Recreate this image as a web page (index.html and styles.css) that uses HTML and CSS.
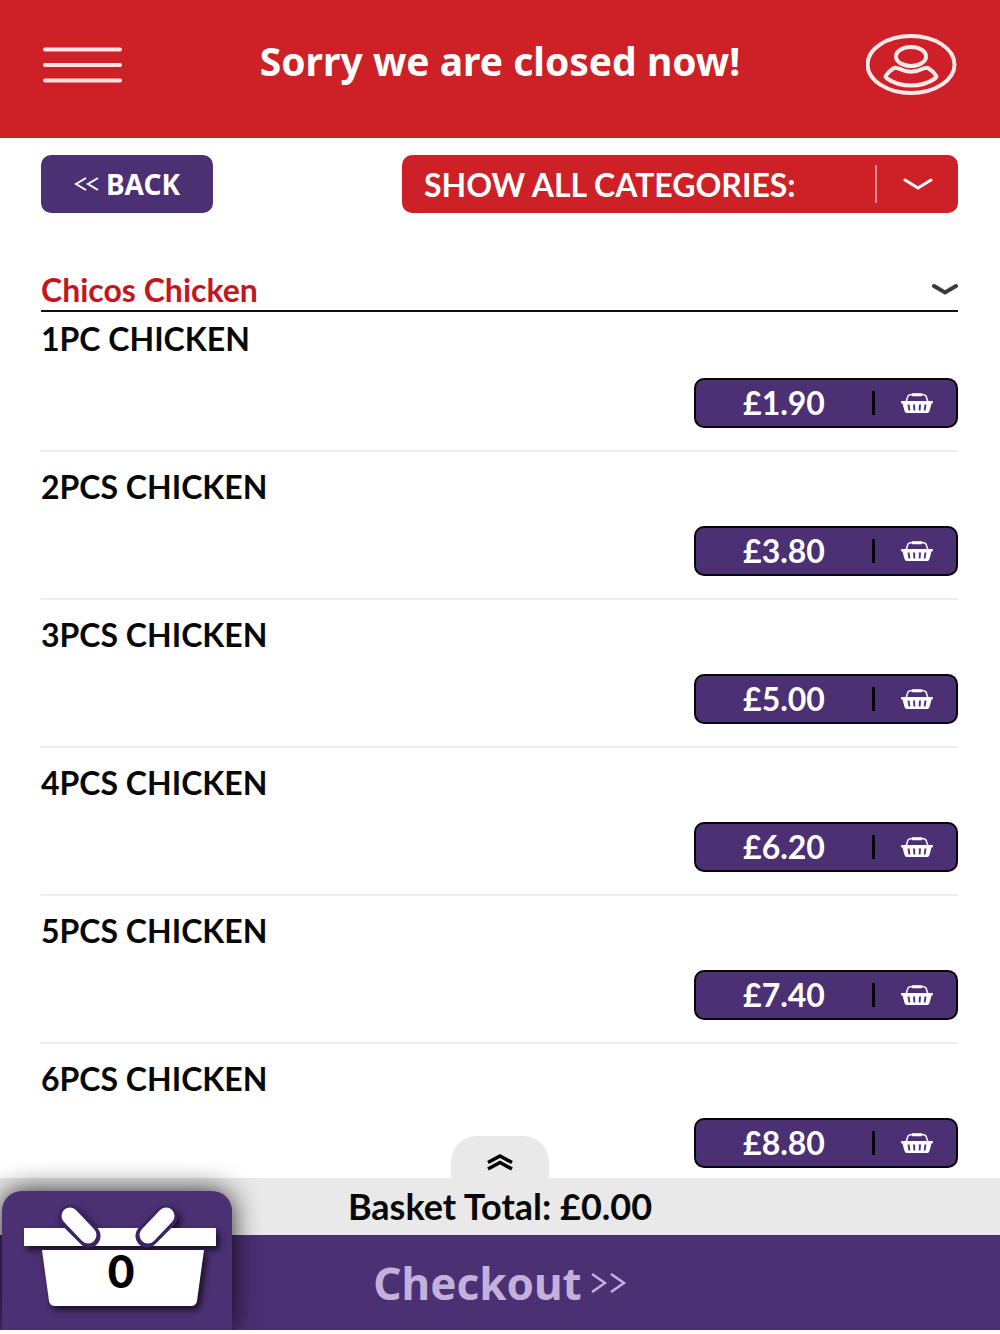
FILE: index.html
```html
<!DOCTYPE html>
<html lang="en">
<head>
<meta charset="utf-8">
<meta name="viewport" content="width=device-width, initial-scale=1">
<title>Chicos Chicken</title>
<link rel="stylesheet" href="styles.css">
</head>
<body>
<svg width="0" height="0" class="sprite" aria-hidden="true">
  <symbol id="basket" viewBox="0 0 32 20">
    <path d="M5 9 7 3Q8 1.500 11 1.500H21Q24 1.500 25 3L27 9" fill="none" stroke="#fff" stroke-width="1.500"/>
    <path d="M12 1.800H20" stroke="#fff" stroke-width="3" stroke-linecap="round"/>
    <path fill-rule="evenodd" fill="#fff" d="M1 8H31Q32 8 32 9T31 10.500H30.500L28.500 18Q28 20 26 20H6Q4 20 3.500 18L1.500 10.500H1Q0 10.500 0 9T1 8ZM6.500 11.500 7.500 17.500H9.300L8.500 11.500ZM12 11.500 12.500 17.500H14.300L14 11.500ZM18 11.500 17.700 17.500H19.500L20 11.500ZM23.500 11.500 22.700 17.500H24.500L25.500 11.500Z"/>
  </symbol>
</svg>

<header class="topbar">
  <button class="icon-button" aria-label="Menu">
    <svg width="82" height="38" viewBox="0 0 82 38"><path d="M3 3.500H78M3 19H78M3 34.500H78" stroke="#ffe3e4" stroke-width="4" stroke-linecap="round"/></svg>
  </button>
  <h1 class="notice">Sorry we are closed now!</h1>
  <button class="icon-button" aria-label="My account">
    <svg width="92" height="62" viewBox="0 0 92 62" fill="none" stroke="#ffe8e8" stroke-width="4">
      <ellipse cx="45" cy="30.500" rx="43.500" ry="28.500"/>
      <ellipse cx="45" cy="22.500" rx="15" ry="9.500"/>
      <path d="M28 34Q29.500 33.300 32 34.300Q45 41 58 34.300Q60.500 33.300 62 34Q67 37 70 41.500Q71 43 69 44.500Q59 51.500 45 51.500Q31 51.500 21 44.500Q19 43 20 41.500Q23 37 28 34Z"/>
    </svg>
  </button>
</header>

<main class="content">
  <div class="toolbar">
    <button class="back"><svg width="26" height="14" viewBox="0 0 26 14"><path d="M12 1 2 7 12 13M24 1 14 7 24 13" fill="none" stroke="#fff" stroke-width="2"/></svg>BACK</button>
    <div class="categories">
      <select class="categories-select" aria-label="Category"><option>SHOW ALL CATEGORIES:</option></select>
      <span class="categories-arrow"><svg width="30" height="14" viewBox="0 0 30 14"><path d="M2 3 15 11 28 3" fill="none" stroke="#fff" stroke-width="3" stroke-linecap="round"/></svg></span>
    </div>
  </div>

  <h2 class="section"><button class="section-toggle" aria-expanded="true">Chicos Chicken<svg width="26" height="12" viewBox="0 0 26 12"><path d="M2 3 13 9.500 24 3" fill="none" stroke="#3a3a3a" stroke-width="4" stroke-linecap="round"/></svg></button></h2>

  <ul class="items">
    <li class="item"><h3 class="item-name">1PC CHICKEN</h3><button class="price"><span class="amount">£1.90</span><svg class="price-icon" width="32" height="20"><use href="#basket"/></svg></button></li>
    <li class="item"><h3 class="item-name">2PCS CHICKEN</h3><button class="price"><span class="amount">£3.80</span><svg class="price-icon" width="32" height="20"><use href="#basket"/></svg></button></li>
    <li class="item"><h3 class="item-name">3PCS CHICKEN</h3><button class="price"><span class="amount">£5.00</span><svg class="price-icon" width="32" height="20"><use href="#basket"/></svg></button></li>
    <li class="item"><h3 class="item-name">4PCS CHICKEN</h3><button class="price"><span class="amount">£6.20</span><svg class="price-icon" width="32" height="20"><use href="#basket"/></svg></button></li>
    <li class="item"><h3 class="item-name">5PCS CHICKEN</h3><button class="price"><span class="amount">£7.40</span><svg class="price-icon" width="32" height="20"><use href="#basket"/></svg></button></li>
    <li class="item"><h3 class="item-name">6PCS CHICKEN</h3><button class="price"><span class="amount">£8.80</span><svg class="price-icon" width="32" height="20"><use href="#basket"/></svg></button></li>
  </ul>
</main>

<footer class="dock">
  <button class="expand" aria-label="Show basket"><svg width="28" height="18" viewBox="0 0 28 18"><path d="M2 9.500 14 3 26 9.500M2 16 14 9.500 26 16" fill="none" stroke="#000" stroke-width="3.500"/></svg></button>
  <div class="total">Basket Total: £0.00</div>
  <button class="checkout">Checkout<svg width="37" height="20" viewBox="0 0 37 20"><path d="M2 1 15 10 2 19M21 1 34 10 21 19" fill="none" stroke="#c4b1db" stroke-width="2.500"/></svg></button>
  <button class="basket" aria-label="Basket, 0 items">
    <svg class="basket-art" viewBox="0 0 198 108" aria-hidden="true">
      <g fill="#fff">
        <path d="M0 25H192V43H0Z"/>
        <path d="M18 47H180L173 98Q172 103 167 103H31Q26 103 25 98Z"/>
      </g>
      <g stroke-linecap="round">
        <path d="M46 14 65 33M142 14 123 33" stroke="#3b2463" stroke-width="23"/>
        <path d="M46 13 64 32M142 13 124 32" stroke="#fff" stroke-width="17"/>
      </g>
    </svg>
    <span class="basket-count">0</span>
  </button>
</footer>
</body>
</html>
```
FILE: styles.css
```css
* { box-sizing: border-box; }

:root {
  --red: #cd2027;
  --purple: #4b3074;
  --grey: #e9e9e9;
}

body {
  margin: 0;
  min-height: 100vh;
  display: flex;
  flex-direction: column;
  background: #fff;
  color: #080808;
  font-family: Lato, "Noto Sans", sans-serif;
}

button, select {
  margin: 0;
  padding: 0;
  border: 0;
  background: none;
  color: inherit;
  font: inherit;
  cursor: pointer;
}

svg { display: block; flex: none; }
.sprite { position: absolute; }

.topbar {
  display: grid;
  grid-template-columns: 92px 1fr 92px;
  align-items: center;
  height: 138px;
  padding: 0 42px 8px;
  background: var(--red);
  color: #fff;
}

.notice {
  margin: 0;
  padding-bottom: 8px;
  text-align: center;
  font: 700 39px/48px "Noto Sans", sans-serif;
}

.content {
  flex: 1;
  padding: 17px 42px 0 41px;
}

.toolbar {
  display: flex;
  justify-content: space-between;
  height: 58px;
}

.back {
  display: flex;
  align-items: center;
  justify-content: center;
  gap: 6px;
  width: 172px;
  border-radius: 10px;
  background: var(--purple);
  color: #fff;
  font: 700 28px/32px "Noto Sans", sans-serif;
}

.categories {
  display: grid;
  grid-template-columns: 1fr 83px;
  width: 556px;
  max-width: 70%;
  border-radius: 10px;
  background: var(--red);
  color: #fff;
}

.categories-select {
  grid-area: 1 / 1 / 2 / 3;
  appearance: none;
  padding-left: 22px;
  font-size: 32px;
  font-weight: 700;
}

.categories-arrow {
  grid-area: 1 / 2;
  align-self: center;
  display: flex;
  align-items: center;
  justify-content: center;
  height: 38px;
  border-left: 2px solid #f08a8e;
  pointer-events: none;
}

.section {
  margin: 59px 0 0;
  border-bottom: 2px solid #111;
}

.section-toggle {
  display: flex;
  align-items: center;
  justify-content: space-between;
  width: 100%;
  height: 38px;
  padding-bottom: 4px;
  color: #c4161c;
  font-size: 32px;
  font-weight: 700;
}

.items {
  margin: 0;
  padding: 0;
  list-style: none;
}

.item {
  display: flex;
  flex-direction: column;
  gap: 22px;
  padding: 18px 0 22px;
  border-bottom: 2px solid #ededed;
}

.item:first-child { padding-top: 10px; }

.item:last-child {
  padding-bottom: 10px;
  border-bottom: 0;
}

.item-name {
  margin: 0;
  font-size: 32px;
  font-weight: 700;
  line-height: 34px;
}

.price {
  align-self: flex-end;
  display: flex;
  align-items: center;
  width: 264px;
  height: 50px;
  border: 2px solid #060309;
  border-radius: 10px;
  background: var(--purple);
  color: #fff;
  font-size: 32px;
  font-weight: 700;
}

.amount {
  flex: 1;
  border-right: 3px solid #060309;
  line-height: 24px;
}

.price-icon { margin: 0 23px 0 26px; }

.dock {
  position: sticky;
  bottom: 0;
  padding-bottom: 4px;
  background: #fff;
}

.expand {
  position: absolute;
  bottom: 100%;
  left: 50%;
  display: flex;
  align-items: center;
  justify-content: center;
  width: 98px;
  height: 42px;
  margin-left: -49px;
  padding-top: 10px;
  border-radius: 26px 26px 0 0;
  background: var(--grey);
}

.total {
  height: 57px;
  background: var(--grey);
  text-align: center;
  font-size: 36px;
  font-weight: 700;
  line-height: 57px;
}

.checkout {
  display: flex;
  align-items: center;
  justify-content: center;
  gap: 8px;
  width: 100%;
  height: 95px;
  background: var(--purple);
  color: #c4b1db;
  font: 700 44px/48px "Noto Sans", sans-serif;
}

.basket {
  position: absolute;
  bottom: 4px;
  left: 2px;
  display: grid;
  width: 230px;
  height: 139px;
  padding: 12px 10px 16px 22px;
  border-radius: 20px 20px 0 0;
  background: var(--purple);
  box-shadow: 0 0 28px rgba(0, 0, 0, 0.85);
  clip-path: inset(-50px -50px 0 -2px);
}

.basket-art {
  grid-area: 1 / 1;
  width: 198px;
  height: 108px;
  filter: drop-shadow(3px 4px 3px rgba(0, 0, 0, 0.7));
}

.basket-count {
  grid-area: 1 / 1;
  z-index: 1;
  align-self: end;
  padding: 0 4px 17px 0;
  color: #000;
  font-size: 46px;
  font-weight: 900;
  line-height: 52px;
}
```
